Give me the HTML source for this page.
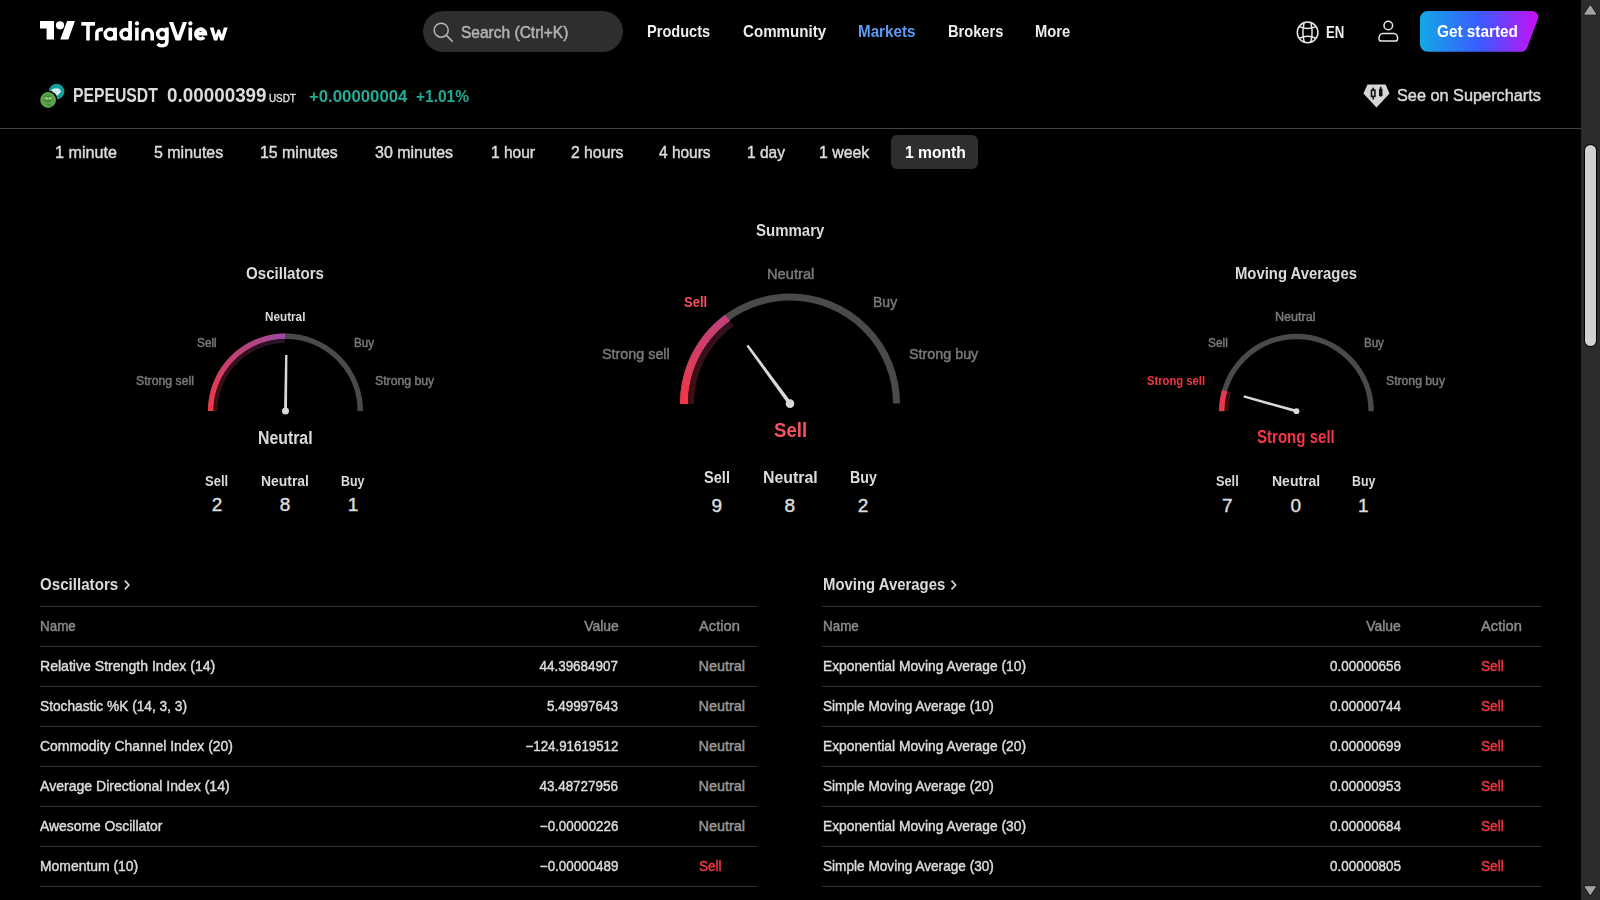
<!DOCTYPE html>
<html><head><meta charset="utf-8"><title>PEPEUSDT Technical Analysis</title>
<style>
html,body{margin:0;padding:0;background:#000;width:1600px;height:900px;overflow:hidden;}
body{position:relative;font-family:"Liberation Sans", sans-serif;}
.t{position:absolute;white-space:pre;line-height:1;font-family:"Liberation Sans", sans-serif;}
.r{-webkit-text-stroke:0.45px currentColor;}
.ln{position:absolute;height:1px;background:#2e2e2e;}
svg{position:absolute;left:0;top:0;}
</style></head><body>
<div style="position:absolute;left:0;top:128px;width:1581px;height:1px;background:#434343"></div>
<div style="position:absolute;left:422.5px;top:11px;width:200px;height:41px;border-radius:20.5px;background:#2e2e2e"></div>
<div style="position:absolute;left:891px;top:135px;width:86.5px;height:34px;border-radius:6px;background:#2e2e2e"></div>
<div class=ln style='left:40px;top:606px;width:718px'></div><div class=ln style='left:822px;top:606px;width:719px'></div><div class=ln style='left:40px;top:646px;width:718px'></div><div class=ln style='left:822px;top:646px;width:719px'></div><div class=ln style='left:40px;top:686px;width:718px'></div><div class=ln style='left:822px;top:686px;width:719px'></div><div class=ln style='left:40px;top:726px;width:718px'></div><div class=ln style='left:822px;top:726px;width:719px'></div><div class=ln style='left:40px;top:766px;width:718px'></div><div class=ln style='left:822px;top:766px;width:719px'></div><div class=ln style='left:40px;top:806px;width:718px'></div><div class=ln style='left:822px;top:806px;width:719px'></div><div class=ln style='left:40px;top:846px;width:718px'></div><div class=ln style='left:822px;top:846px;width:719px'></div><div class=ln style='left:40px;top:886px;width:718px'></div><div class=ln style='left:822px;top:886px;width:719px'></div>
<svg width="1600" height="900" viewBox="0 0 1600 900">
<defs>
<linearGradient id="gs" x1="1420" y1="0" x2="1539" y2="0" gradientUnits="userSpaceOnUse">
<stop offset="0" stop-color="#12a9e6"/><stop offset="0.5" stop-color="#3a5bff"/><stop offset="1" stop-color="#c90ef5"/>
</linearGradient>
</defs>
<!-- logo -->
<path d="M40 21.1H54V39.5H46.6V28.6H40Z" fill="#fff"/>
<circle cx="60" cy="25.3" r="4.1" fill="#fff"/>
<path d="M67.1 21.1H74.9L68.4 39.5H60.3Z" fill="#fff"/>
<g fill="#fff">
<rect x="81.3" y="22" width="13.7" height="3.7"/><rect x="86.2" y="22" width="3.6" height="18.5"/>
<rect x="108.3" y="27.6" width="0" height="0"/>
<rect x="113.3" y="27.6" width="3.6" height="12.9"/>
<rect x="128.3" y="21" width="3.6" height="19.5"/>
<rect x="135.1" y="27.6" width="3.6" height="12.9"/><circle cx="137" cy="23.4" r="2.1"/>
<rect x="188.5" y="27.6" width="3.6" height="12.9"/><circle cx="190.4" cy="23.4" r="2.1"/>
<path d="M169 22H173.2L178 35.6L182.8 22H187L180.4 40.5H175.6Z"/>
<path d="M209.8 27.6H213.6L215.7 35.1L217.7 29.4H219.8L221.8 35.1L223.9 27.6H227.7L223.5 40.5H220.3L218.75 35.6L217.2 40.5H214Z"/>
</g>
<g stroke="#fff" stroke-width="3.6" fill="none">
<path d="M96.9 40.5V33C96.9 30.4 98.6 29.4 102.9 29.4"/>
<ellipse cx="110.2" cy="34.1" rx="4.95" ry="4.85"/>
<circle cx="125.6" cy="34.1" r="4.6"/>
<path d="M143.1 40.5V34.2A4.55 4.55 0 0 1 152.2 34.2V40.5"/>
<circle cx="162.2" cy="34" r="4.5"/>
<path d="M166.9 27.6V41C166.9 44.2 164.8 45.7 162.1 45.7C160 45.7 158.6 45 157.6 43.8"/>
<path d="M195.6 33.6H205.4A4.8 4.8 0 1 0 204.1 37.3"/>
</g>
<!-- search icon -->
<circle cx="441.2" cy="30.2" r="7" stroke="#b5b5b5" stroke-width="1.5" fill="none"/>
<path d="M446.4 35.4L452.3 41.3" stroke="#b5b5b5" stroke-width="1.6" stroke-linecap="round"/>
<!-- globe -->
<g stroke="#e6e6e6" stroke-width="1.5" fill="none">
<circle cx="1307.6" cy="32.4" r="10.3"/>
<path d="M1304.2 22.6Q1301.6 32.4 1304.2 42.2M1310.8 22.6Q1313.4 32.4 1310.8 42.2"/>
<path d="M1299.3 26.6Q1307.6 30.4 1315.9 26.6"/>
<path d="M1299.3 38.2Q1307.6 34.4 1315.9 38.2"/>
</g>
<!-- user -->
<g stroke="#e6e6e6" stroke-width="1.5" fill="none">
<circle cx="1388.3" cy="25.5" r="4.3"/>
<path d="M1382.6 33.4H1394C1396.2 33.4 1397.6 36 1397.6 38.4C1397.6 40 1396.8 41 1395.4 41H1381.2C1379.8 41 1379 40 1379 38.4C1379 36 1380.4 33.4 1382.6 33.4Z"/>
</g>
<!-- get started button -->
<path d="M1428 11H1531C1536 11 1539.3 14.5 1538 18.5L1527.5 47C1526.5 50 1524.5 51.8 1521 51.8H1428C1423.5 51.8 1420 48.3 1420 43.8V19C1420 14.5 1423.5 11 1428 11Z" fill="url(#gs)"/>
<!-- coins -->
<circle cx="56.6" cy="91.6" r="7.8" fill="#109e9e"/>
<path d="M50.8 90.6L54 88.4H58.8L61.2 91.4L57 95.8Z" fill="#ffffff"/>
<path d="M54 88.4L55.8 91.2L57 95.8M58.8 88.4L57.4 91.2M50.8 90.6L55.8 91.2H61.2" stroke="#7fd0d0" stroke-width="0.6" fill="none"/>
<circle cx="48.1" cy="100" r="9.4" fill="#000"/>
<circle cx="48.1" cy="100" r="7.9" fill="#5ba24b"/>
<path d="M44.5 96.5Q46 95 47.5 96.8M47.8 96.6Q49.5 95.2 51 97M43.8 100.4Q47 102.6 51.5 100.8M47.5 104.3Q49.5 104.5 51.2 106" stroke="#2f6a27" stroke-width="0.9" fill="none"/>
<circle cx="46.6" cy="98.2" r="0.9" fill="#dfe9dc"/>
<circle cx="50" cy="98.2" r="0.9" fill="#dfe9dc"/>
<!-- supercharts diamond -->
<path d="M1367.5 84.6H1385.6L1389.5 93.5L1376.5 107.6L1363.4 93.5Z" fill="#d6d6d6"/>
<g stroke="#111" stroke-width="1.6" fill="none">
<rect x="1371.5" y="90.2" width="3.4" height="6.2"/>
<path d="M1373.2 87.8V90.2M1373.2 96.4V99.4M1380.7 86.8V89M1380.7 95.8V96.8"/>
</g>
<rect x="1379" y="88.8" width="3.5" height="7.2" fill="#111"/>
<!-- gauges -->
<path d='M210.75 411.00 A74.75 74.75 0 0 1 360.25 411.00' stroke='#4a4a4a' stroke-width='5.5' fill='none'/>
<path d='M683.50 403.60 A106.5 106.5 0 0 1 896.50 403.60' stroke='#4a4a4a' stroke-width='7' fill='none'/>
<path d='M1221.85 411.20 A74.65 74.65 0 0 1 1371.15 411.20' stroke='#4a4a4a' stroke-width='5.5' fill='none'/>
<!-- chevrons -->
<path d="M124.8 580.6L128.9 585L124.8 589.4" stroke="#dbdbdb" stroke-width="1.6" fill="none"/>
<path d="M951.5 580.6L955.6 585L951.5 589.4" stroke="#dbdbdb" stroke-width="1.6" fill="none"/>
</svg>
<div style='position:absolute;left:206px;top:331px;width:159px;height:82px;background:conic-gradient(from 270deg at 79.50px 80.00px, rgb(242, 54, 69) 0deg, rgb(154, 74, 160) 90deg, transparent 90deg);-webkit-mask-image:radial-gradient(circle at 79.50px 80.00px, transparent 71.50px, #000 72.50px, #000 77.00px, transparent 78.00px);mask-image:radial-gradient(circle at 79.50px 80.00px, transparent 71.50px, #000 72.50px, #000 77.00px, transparent 78.00px)'></div><div style='position:absolute;left:211px;top:337px;width:148px;height:76px;background:conic-gradient(from 270deg at 74.50px 74.00px, rgb(62, 14, 17) 0deg, rgb(40, 19, 41) 90deg, transparent 90deg);-webkit-mask-image:radial-gradient(circle at 74.50px 74.00px, transparent 67.50px, #000 68.50px, #000 71.50px, transparent 72.50px);mask-image:radial-gradient(circle at 74.50px 74.00px, transparent 67.50px, #000 68.50px, #000 71.50px, transparent 72.50px)'></div><div style='position:absolute;left:678px;top:291px;width:224px;height:114px;background:conic-gradient(from 270deg at 112.00px 112.60px, rgb(242, 54, 69) 0deg, rgb(189, 66, 124) 54deg, transparent 54deg);-webkit-mask-image:radial-gradient(circle at 112.00px 112.60px, transparent 101.50px, #000 102.50px, #000 109.50px, transparent 110.50px);mask-image:radial-gradient(circle at 112.00px 112.60px, transparent 101.50px, #000 102.50px, #000 109.50px, transparent 110.50px)'></div><div style='position:absolute;left:686px;top:299px;width:208px;height:106px;background:conic-gradient(from 270deg at 104.00px 104.60px, rgb(62, 14, 17) 0deg, rgb(49, 17, 32) 54deg, transparent 54deg);-webkit-mask-image:radial-gradient(circle at 104.00px 104.60px, transparent 95.50px, #000 96.50px, #000 101.50px, transparent 102.50px);mask-image:radial-gradient(circle at 104.00px 104.60px, transparent 95.50px, #000 96.50px, #000 101.50px, transparent 102.50px)'></div><div style='position:absolute;left:1217px;top:331px;width:159px;height:82px;background:conic-gradient(from 270deg at 79.50px 80.20px, rgb(242, 54, 69) 0deg, rgb(226, 58, 85) 16deg, transparent 16deg);-webkit-mask-image:radial-gradient(circle at 79.50px 80.20px, transparent 71.40px, #000 72.40px, #000 76.90px, transparent 77.90px);mask-image:radial-gradient(circle at 79.50px 80.20px, transparent 71.40px, #000 72.40px, #000 76.90px, transparent 77.90px)'></div><div style='position:absolute;left:1222px;top:337px;width:148px;height:76px;background:conic-gradient(from 270deg at 74.50px 74.20px, rgb(62, 14, 17) 0deg, rgb(58, 15, 22) 16deg, transparent 16deg);-webkit-mask-image:radial-gradient(circle at 74.50px 74.20px, transparent 67.40px, #000 68.40px, #000 71.40px, transparent 72.40px);mask-image:radial-gradient(circle at 74.50px 74.20px, transparent 67.40px, #000 68.40px, #000 71.40px, transparent 72.40px)'></div>
<svg width="1600" height="900" viewBox="0 0 1600 900"><polygon points='284.05,410.98 285.13,354.99 287.43,355.02 286.95,411.02' fill='#d9d9d9'/><circle cx='285.5' cy='411' r='3.5' fill='#d9d9d9'/>
<polygon points='788.47,404.72 746.51,346.21 748.44,344.79 791.53,402.48' fill='#d9d9d9'/><circle cx='790' cy='403.6' r='4.3' fill='#d9d9d9'/>
<polygon points='1296.11,412.60 1243.45,397.43 1244.04,395.31 1296.89,409.80' fill='#d9d9d9'/><circle cx='1296.5' cy='411.2' r='2.9' fill='#d9d9d9'/></svg>
<span class='t r' style='left:461px;top:24px;font-size:16.3px;font-weight:400;color:#b5b5b5;transform:scaleX(0.9533);transform-origin:0 0;'>Search (Ctrl+K)</span><span class='t' style='left:647px;top:24px;font-size:16.6px;font-weight:700;color:#ededed;transform:scaleX(0.8773);transform-origin:0 0;'>Products</span><span class='t' style='left:742.5px;top:24px;font-size:16.6px;font-weight:700;color:#ededed;transform:scaleX(0.9105);transform-origin:0 0;'>Community</span><span class='t' style='left:858px;top:24px;font-size:16.6px;font-weight:700;color:#5b9cf6;transform:scaleX(0.9150);transform-origin:0 0;'>Markets</span><span class='t' style='left:947.7px;top:24px;font-size:16.6px;font-weight:700;color:#ededed;transform:scaleX(0.8815);transform-origin:0 0;'>Brokers</span><span class='t' style='left:1035.4px;top:24px;font-size:16.6px;font-weight:700;color:#ededed;transform:scaleX(0.8876);transform-origin:0 0;'>More</span><span class='t' style='left:1325.6px;top:25px;font-size:16.6px;font-weight:700;color:#ededed;transform:scaleX(0.7935);transform-origin:0 0;'>EN</span><span class='t' style='left:1436.7px;top:24px;font-size:16.6px;font-weight:700;color:#ffffff;transform:scaleX(0.9234);transform-origin:0 0;'>Get started</span><span class='t' style='left:72.5px;top:86px;font-size:19.6px;font-weight:700;color:#dbdbdb;transform:scaleX(0.8028);transform-origin:0 0;'>PEPEUSDT</span><span class='t' style='left:166.6px;top:86px;font-size:19.6px;font-weight:700;color:#dbdbdb;transform:scaleX(0.9620);transform-origin:0 0;'>0.00000399</span><span class='t r' style='left:269.3px;top:93px;font-size:11.2px;font-weight:400;color:#dbdbdb;transform:scaleX(0.8796);transform-origin:0 0;'>USDT</span><span class='t' style='left:309px;top:88px;font-size:16.4px;font-weight:700;color:#22ab94;transform:scaleX(1.0232);transform-origin:0 0;'>+0.00000004</span><span class='t' style='left:416.4px;top:88px;font-size:16.4px;font-weight:700;color:#22ab94;transform:scaleX(0.9439);transform-origin:0 0;'>+1.01%</span><span class='t r' style='left:1397px;top:87px;font-size:16.4px;font-weight:400;color:#dbdbdb;transform:scaleX(0.9933);transform-origin:0 0;'>See on Supercharts</span><span class='t r' style='left:55px;top:145px;font-size:16.6px;font-weight:400;color:#dbdbdb;transform:scaleX(0.9724);transform-origin:0 0;'>1 minute</span><span class='t r' style='left:153.75px;top:145px;font-size:16.6px;font-weight:400;color:#dbdbdb;transform:scaleX(0.9624);transform-origin:0 0;'>5 minutes</span><span class='t r' style='left:260.3px;top:145px;font-size:16.6px;font-weight:400;color:#dbdbdb;transform:scaleX(0.9585);transform-origin:0 0;'>15 minutes</span><span class='t r' style='left:375.3px;top:145px;font-size:16.6px;font-weight:400;color:#dbdbdb;transform:scaleX(0.9622);transform-origin:0 0;'>30 minutes</span><span class='t r' style='left:491px;top:145px;font-size:16.6px;font-weight:400;color:#dbdbdb;transform:scaleX(0.9349);transform-origin:0 0;'>1 hour</span><span class='t r' style='left:570.7px;top:145px;font-size:16.6px;font-weight:400;color:#dbdbdb;transform:scaleX(0.9483);transform-origin:0 0;'>2 hours</span><span class='t r' style='left:658.9px;top:145px;font-size:16.6px;font-weight:400;color:#dbdbdb;transform:scaleX(0.9321);transform-origin:0 0;'>4 hours</span><span class='t r' style='left:746.6px;top:145px;font-size:16.6px;font-weight:400;color:#dbdbdb;transform:scaleX(0.9336);transform-origin:0 0;'>1 day</span><span class='t r' style='left:819.3px;top:145px;font-size:16.6px;font-weight:400;color:#dbdbdb;transform:scaleX(0.9567);transform-origin:0 0;'>1 week</span><span class='t' style='left:904.5px;top:145px;font-size:16.6px;font-weight:700;color:#ffffff;transform:scaleX(0.9422);transform-origin:0 0;'>1 month</span><span class='t' style='left:246.25px;top:266px;font-size:16.6px;font-weight:700;color:#dbdbdb;transform:scaleX(0.9093);transform-origin:0 0;'>Oscillators</span><span class='t' style='left:265px;top:311px;font-size:12.4px;font-weight:700;color:#dbdbdb;transform:scaleX(0.9461);transform-origin:0 0;'>Neutral</span><span class='t r' style='left:196.6px;top:337px;font-size:12.4px;font-weight:400;color:#7a7a7a;transform:scaleX(0.9530);transform-origin:0 0;'>Sell</span><span class='t r' style='left:353.7px;top:337px;font-size:12.4px;font-weight:400;color:#7a7a7a;transform:scaleX(0.9364);transform-origin:0 0;'>Buy</span><span class='t r' style='left:136px;top:375px;font-size:12.4px;font-weight:400;color:#7a7a7a;transform:scaleX(0.9907);transform-origin:0 0;'>Strong sell</span><span class='t r' style='left:375.4px;top:375px;font-size:12.4px;font-weight:400;color:#7a7a7a;transform:scaleX(0.9877);transform-origin:0 0;'>Strong buy</span><span class='t' style='left:258px;top:429px;font-size:18.3px;font-weight:700;color:#dbdbdb;transform:scaleX(0.8667);transform-origin:0 0;'>Neutral</span><span class='t' style='left:205.35px;top:474px;font-size:14.5px;font-weight:700;color:#dbdbdb;transform:scaleX(0.8974);transform-origin:0 0;'>Sell</span><span class='t' style='left:260.8px;top:474px;font-size:14.5px;font-weight:700;color:#dbdbdb;transform:scaleX(0.9606);transform-origin:0 0;'>Neutral</span><span class='t' style='left:341.2px;top:474px;font-size:14.5px;font-weight:700;color:#dbdbdb;transform:scaleX(0.8538);transform-origin:0 0;'>Buy</span><span class='t r' style='left:211.71px;top:495px;font-size:19px;font-weight:400;color:#dbdbdb;'>2</span><span class='t r' style='left:279.71px;top:495px;font-size:19px;font-weight:400;color:#dbdbdb;'>8</span><span class='t r' style='left:347.71px;top:495px;font-size:19px;font-weight:400;color:#dbdbdb;'>1</span><span class='t' style='left:756.4px;top:223px;font-size:16.6px;font-weight:700;color:#dbdbdb;transform:scaleX(0.9030);transform-origin:0 0;'>Summary</span><span class='t r' style='left:766.7px;top:267px;font-size:14.5px;font-weight:400;color:#7a7a7a;transform:scaleX(1.0118);transform-origin:0 0;'>Neutral</span><span class='t' style='left:683.75px;top:295px;font-size:14.5px;font-weight:700;color:#f7525f;transform:scaleX(0.8974);transform-origin:0 0;'>Sell</span><span class='t r' style='left:873.4px;top:295px;font-size:14.5px;font-weight:400;color:#7a7a7a;transform:scaleX(0.9680);transform-origin:0 0;'>Buy</span><span class='t r' style='left:602.25px;top:347px;font-size:14.5px;font-weight:400;color:#7a7a7a;transform:scaleX(0.9888);transform-origin:0 0;'>Strong sell</span><span class='t r' style='left:909.3px;top:347px;font-size:14.5px;font-weight:400;color:#7a7a7a;transform:scaleX(0.9880);transform-origin:0 0;'>Strong buy</span><span class='t' style='left:773.75px;top:420px;font-size:20.7px;font-weight:700;color:#f7525f;transform:scaleX(0.9005);transform-origin:0 0;'>Sell</span><span class='t' style='left:703.75px;top:470px;font-size:16.6px;font-weight:700;color:#dbdbdb;transform:scaleX(0.8804);transform-origin:0 0;'>Sell</span><span class='t' style='left:762.5px;top:470px;font-size:16.6px;font-weight:700;color:#dbdbdb;transform:scaleX(0.9576);transform-origin:0 0;'>Neutral</span><span class='t' style='left:850px;top:470px;font-size:16.6px;font-weight:700;color:#dbdbdb;transform:scaleX(0.8578);transform-origin:0 0;'>Buy</span><span class='t r' style='left:711.61px;top:496px;font-size:19px;font-weight:400;color:#dbdbdb;'>9</span><span class='t r' style='left:784.61px;top:496px;font-size:19px;font-weight:400;color:#dbdbdb;'>8</span><span class='t r' style='left:857.71px;top:496px;font-size:19px;font-weight:400;color:#dbdbdb;'>2</span><span class='t' style='left:1235.1px;top:266px;font-size:16.6px;font-weight:700;color:#dbdbdb;transform:scaleX(0.8952);transform-origin:0 0;'>Moving Averages</span><span class='t r' style='left:1275.4px;top:311px;font-size:12.4px;font-weight:400;color:#7a7a7a;transform:scaleX(1.0162);transform-origin:0 0;'>Neutral</span><span class='t r' style='left:1207.8px;top:337px;font-size:12.4px;font-weight:400;color:#7a7a7a;transform:scaleX(0.9578);transform-origin:0 0;'>Sell</span><span class='t r' style='left:1364.2px;top:337px;font-size:12.4px;font-weight:400;color:#7a7a7a;transform:scaleX(0.9317);transform-origin:0 0;'>Buy</span><span class='t' style='left:1146.9px;top:375px;font-size:12.4px;font-weight:700;color:#f23645;transform:scaleX(0.9074);transform-origin:0 0;'>Strong sell</span><span class='t r' style='left:1386px;top:375px;font-size:12.4px;font-weight:400;color:#7a7a7a;transform:scaleX(0.9844);transform-origin:0 0;'>Strong buy</span><span class='t' style='left:1256.9px;top:428px;font-size:18.3px;font-weight:700;color:#f23645;transform:scaleX(0.8236);transform-origin:0 0;'>Strong sell</span><span class='t' style='left:1216.2px;top:474px;font-size:14.5px;font-weight:700;color:#dbdbdb;transform:scaleX(0.8800);transform-origin:0 0;'>Sell</span><span class='t' style='left:1271.5px;top:474px;font-size:14.5px;font-weight:700;color:#dbdbdb;transform:scaleX(0.9646);transform-origin:0 0;'>Neutral</span><span class='t' style='left:1351.8px;top:474px;font-size:14.5px;font-weight:700;color:#dbdbdb;transform:scaleX(0.8502);transform-origin:0 0;'>Buy</span><span class='t r' style='left:1222.11px;top:496px;font-size:19px;font-weight:400;color:#dbdbdb;'>7</span><span class='t r' style='left:1290.51px;top:496px;font-size:19px;font-weight:400;color:#dbdbdb;'>0</span><span class='t r' style='left:1358.01px;top:496px;font-size:19px;font-weight:400;color:#dbdbdb;'>1</span><span class='t' style='left:40px;top:577px;font-size:16.6px;font-weight:700;color:#dbdbdb;transform:scaleX(0.9116);transform-origin:0 0;'>Oscillators</span><span class='t' style='left:822.5px;top:577px;font-size:16.6px;font-weight:700;color:#dbdbdb;transform:scaleX(0.8974);transform-origin:0 0;'>Moving Averages</span><span class='t r' style='left:40px;top:619px;font-size:14.4px;font-weight:400;color:#8c8c8c;transform:scaleX(0.9325);transform-origin:0 0;'>Name</span><span class='t r' style='left:582.65px;top:619px;font-size:14.4px;font-weight:400;color:#8c8c8c;transform:scaleX(0.9678);transform-origin:100% 0;'>Value</span><span class='t r' style='left:698.5px;top:619px;font-size:14.4px;font-weight:400;color:#8c8c8c;transform:scaleX(1.0225);transform-origin:0 0;'>Action</span><span class='t r' style='left:822.5px;top:619px;font-size:14.4px;font-weight:400;color:#8c8c8c;transform:scaleX(0.9325);transform-origin:0 0;'>Name</span><span class='t r' style='left:1364.85px;top:619px;font-size:14.4px;font-weight:400;color:#8c8c8c;transform:scaleX(0.9678);transform-origin:100% 0;'>Value</span><span class='t r' style='left:1481px;top:619px;font-size:14.4px;font-weight:400;color:#8c8c8c;transform:scaleX(1.0225);transform-origin:0 0;'>Action</span><span class='t r' style='left:40px;top:659px;font-size:14.4px;font-weight:400;color:#dbdbdb;transform:scaleX(0.9783);transform-origin:0 0;'>Relative Strength Index (14)</span><span class='t r' style='left:534.35px;top:659px;font-size:14.4px;font-weight:400;color:#dbdbdb;transform:scaleX(0.9352);transform-origin:100% 0;'>44.39684907</span><span class='t r' style='left:698.5px;top:659px;font-size:14.4px;font-weight:400;color:#989898;'>Neutral</span><span class='t r' style='left:40px;top:699px;font-size:14.4px;font-weight:400;color:#dbdbdb;transform:scaleX(0.9522);transform-origin:0 0;'>Stochastic %K (14, 3, 3)</span><span class='t r' style='left:542.37px;top:699px;font-size:14.4px;font-weight:400;color:#dbdbdb;transform:scaleX(0.9351);transform-origin:100% 0;'>5.49997643</span><span class='t r' style='left:698.5px;top:699px;font-size:14.4px;font-weight:400;color:#989898;'>Neutral</span><span class='t r' style='left:40px;top:739px;font-size:14.4px;font-weight:400;color:#dbdbdb;transform:scaleX(0.9690);transform-origin:0 0;'>Commodity Channel Index (20)</span><span class='t r' style='left:517.95px;top:739px;font-size:14.4px;font-weight:400;color:#dbdbdb;transform:scaleX(0.9258);transform-origin:100% 0;'>−124.91619512</span><span class='t r' style='left:698.5px;top:739px;font-size:14.4px;font-weight:400;color:#989898;'>Neutral</span><span class='t r' style='left:40px;top:779px;font-size:14.4px;font-weight:400;color:#dbdbdb;transform:scaleX(0.9772);transform-origin:0 0;'>Average Directional Index (14)</span><span class='t r' style='left:534.35px;top:779px;font-size:14.4px;font-weight:400;color:#dbdbdb;transform:scaleX(0.9352);transform-origin:100% 0;'>43.48727956</span><span class='t r' style='left:698.5px;top:779px;font-size:14.4px;font-weight:400;color:#989898;'>Neutral</span><span class='t r' style='left:40px;top:819px;font-size:14.4px;font-weight:400;color:#dbdbdb;transform:scaleX(0.9645);transform-origin:0 0;'>Awesome Oscillator</span><span class='t r' style='left:533.96px;top:819px;font-size:14.4px;font-weight:400;color:#dbdbdb;transform:scaleX(0.9309);transform-origin:100% 0;'>−0.00000226</span><span class='t r' style='left:698.5px;top:819px;font-size:14.4px;font-weight:400;color:#989898;'>Neutral</span><span class='t r' style='left:40px;top:859px;font-size:14.4px;font-weight:400;color:#dbdbdb;transform:scaleX(0.9667);transform-origin:0 0;'>Momentum (10)</span><span class='t r' style='left:533.96px;top:859px;font-size:14.4px;font-weight:400;color:#dbdbdb;transform:scaleX(0.9309);transform-origin:100% 0;'>−0.00000489</span><span class='t r' style='left:698.5px;top:859px;font-size:14.4px;font-weight:400;color:#f23645;transform:scaleX(0.9417);transform-origin:0 0;'>Sell</span><span class='t r' style='left:822.5px;top:659px;font-size:14.4px;font-weight:400;color:#dbdbdb;transform:scaleX(0.9587);transform-origin:0 0;'>Exponential Moving Average (10)</span><span class='t r' style='left:1324.57px;top:659px;font-size:14.4px;font-weight:400;color:#dbdbdb;transform:scaleX(0.9338);transform-origin:100% 0;'>0.00000656</span><span class='t r' style='left:1481px;top:659px;font-size:14.4px;font-weight:400;color:#f23645;transform:scaleX(0.9500);transform-origin:0 0;'>Sell</span><span class='t r' style='left:822.5px;top:699px;font-size:14.4px;font-weight:400;color:#dbdbdb;transform:scaleX(0.9467);transform-origin:0 0;'>Simple Moving Average (10)</span><span class='t r' style='left:1324.57px;top:699px;font-size:14.4px;font-weight:400;color:#dbdbdb;transform:scaleX(0.9338);transform-origin:100% 0;'>0.00000744</span><span class='t r' style='left:1481px;top:699px;font-size:14.4px;font-weight:400;color:#f23645;transform:scaleX(0.9500);transform-origin:0 0;'>Sell</span><span class='t r' style='left:822.5px;top:739px;font-size:14.4px;font-weight:400;color:#dbdbdb;transform:scaleX(0.9587);transform-origin:0 0;'>Exponential Moving Average (20)</span><span class='t r' style='left:1324.57px;top:739px;font-size:14.4px;font-weight:400;color:#dbdbdb;transform:scaleX(0.9338);transform-origin:100% 0;'>0.00000699</span><span class='t r' style='left:1481px;top:739px;font-size:14.4px;font-weight:400;color:#f23645;transform:scaleX(0.9500);transform-origin:0 0;'>Sell</span><span class='t r' style='left:822.5px;top:779px;font-size:14.4px;font-weight:400;color:#dbdbdb;transform:scaleX(0.9467);transform-origin:0 0;'>Simple Moving Average (20)</span><span class='t r' style='left:1324.57px;top:779px;font-size:14.4px;font-weight:400;color:#dbdbdb;transform:scaleX(0.9338);transform-origin:100% 0;'>0.00000953</span><span class='t r' style='left:1481px;top:779px;font-size:14.4px;font-weight:400;color:#f23645;transform:scaleX(0.9500);transform-origin:0 0;'>Sell</span><span class='t r' style='left:822.5px;top:819px;font-size:14.4px;font-weight:400;color:#dbdbdb;transform:scaleX(0.9587);transform-origin:0 0;'>Exponential Moving Average (30)</span><span class='t r' style='left:1324.57px;top:819px;font-size:14.4px;font-weight:400;color:#dbdbdb;transform:scaleX(0.9338);transform-origin:100% 0;'>0.00000684</span><span class='t r' style='left:1481px;top:819px;font-size:14.4px;font-weight:400;color:#f23645;transform:scaleX(0.9500);transform-origin:0 0;'>Sell</span><span class='t r' style='left:822.5px;top:859px;font-size:14.4px;font-weight:400;color:#dbdbdb;transform:scaleX(0.9467);transform-origin:0 0;'>Simple Moving Average (30)</span><span class='t r' style='left:1324.57px;top:859px;font-size:14.4px;font-weight:400;color:#dbdbdb;transform:scaleX(0.9338);transform-origin:100% 0;'>0.00000805</span><span class='t r' style='left:1481px;top:859px;font-size:14.4px;font-weight:400;color:#f23645;transform:scaleX(0.9500);transform-origin:0 0;'>Sell</span>
<!-- scrollbar -->
<div style="position:absolute;left:1581px;top:0;width:19px;height:900px;background:#2c2c2c"></div>
<div style="position:absolute;left:1585px;top:144.6px;width:11px;height:201px;border-radius:5.5px;background:#d1d1d1;box-shadow:0 0 0 1px #000"></div>
<svg width="1600" height="900" style="position:absolute;left:0;top:0">
<path d="M1590.3 5.2L1596.4 14.4H1584.2Z" fill="#a3a3a3" stroke="#141414" stroke-width="1.6" stroke-linejoin="round" paint-order="stroke"/>
<path d="M1590.3 5.9L1595.6 13.9H1585Z" fill="#a3a3a3" stroke="#a3a3a3" stroke-width="1" stroke-linejoin="round"/>
<path d="M1590.3 895.4L1596.4 886.2H1584.2Z" fill="#a3a3a3" stroke="#141414" stroke-width="1.6" stroke-linejoin="round"/>
<path d="M1590.3 894.7L1595.6 886.7H1585Z" fill="#a3a3a3" stroke="#a3a3a3" stroke-width="1" stroke-linejoin="round"/>
</svg>
</body></html>
